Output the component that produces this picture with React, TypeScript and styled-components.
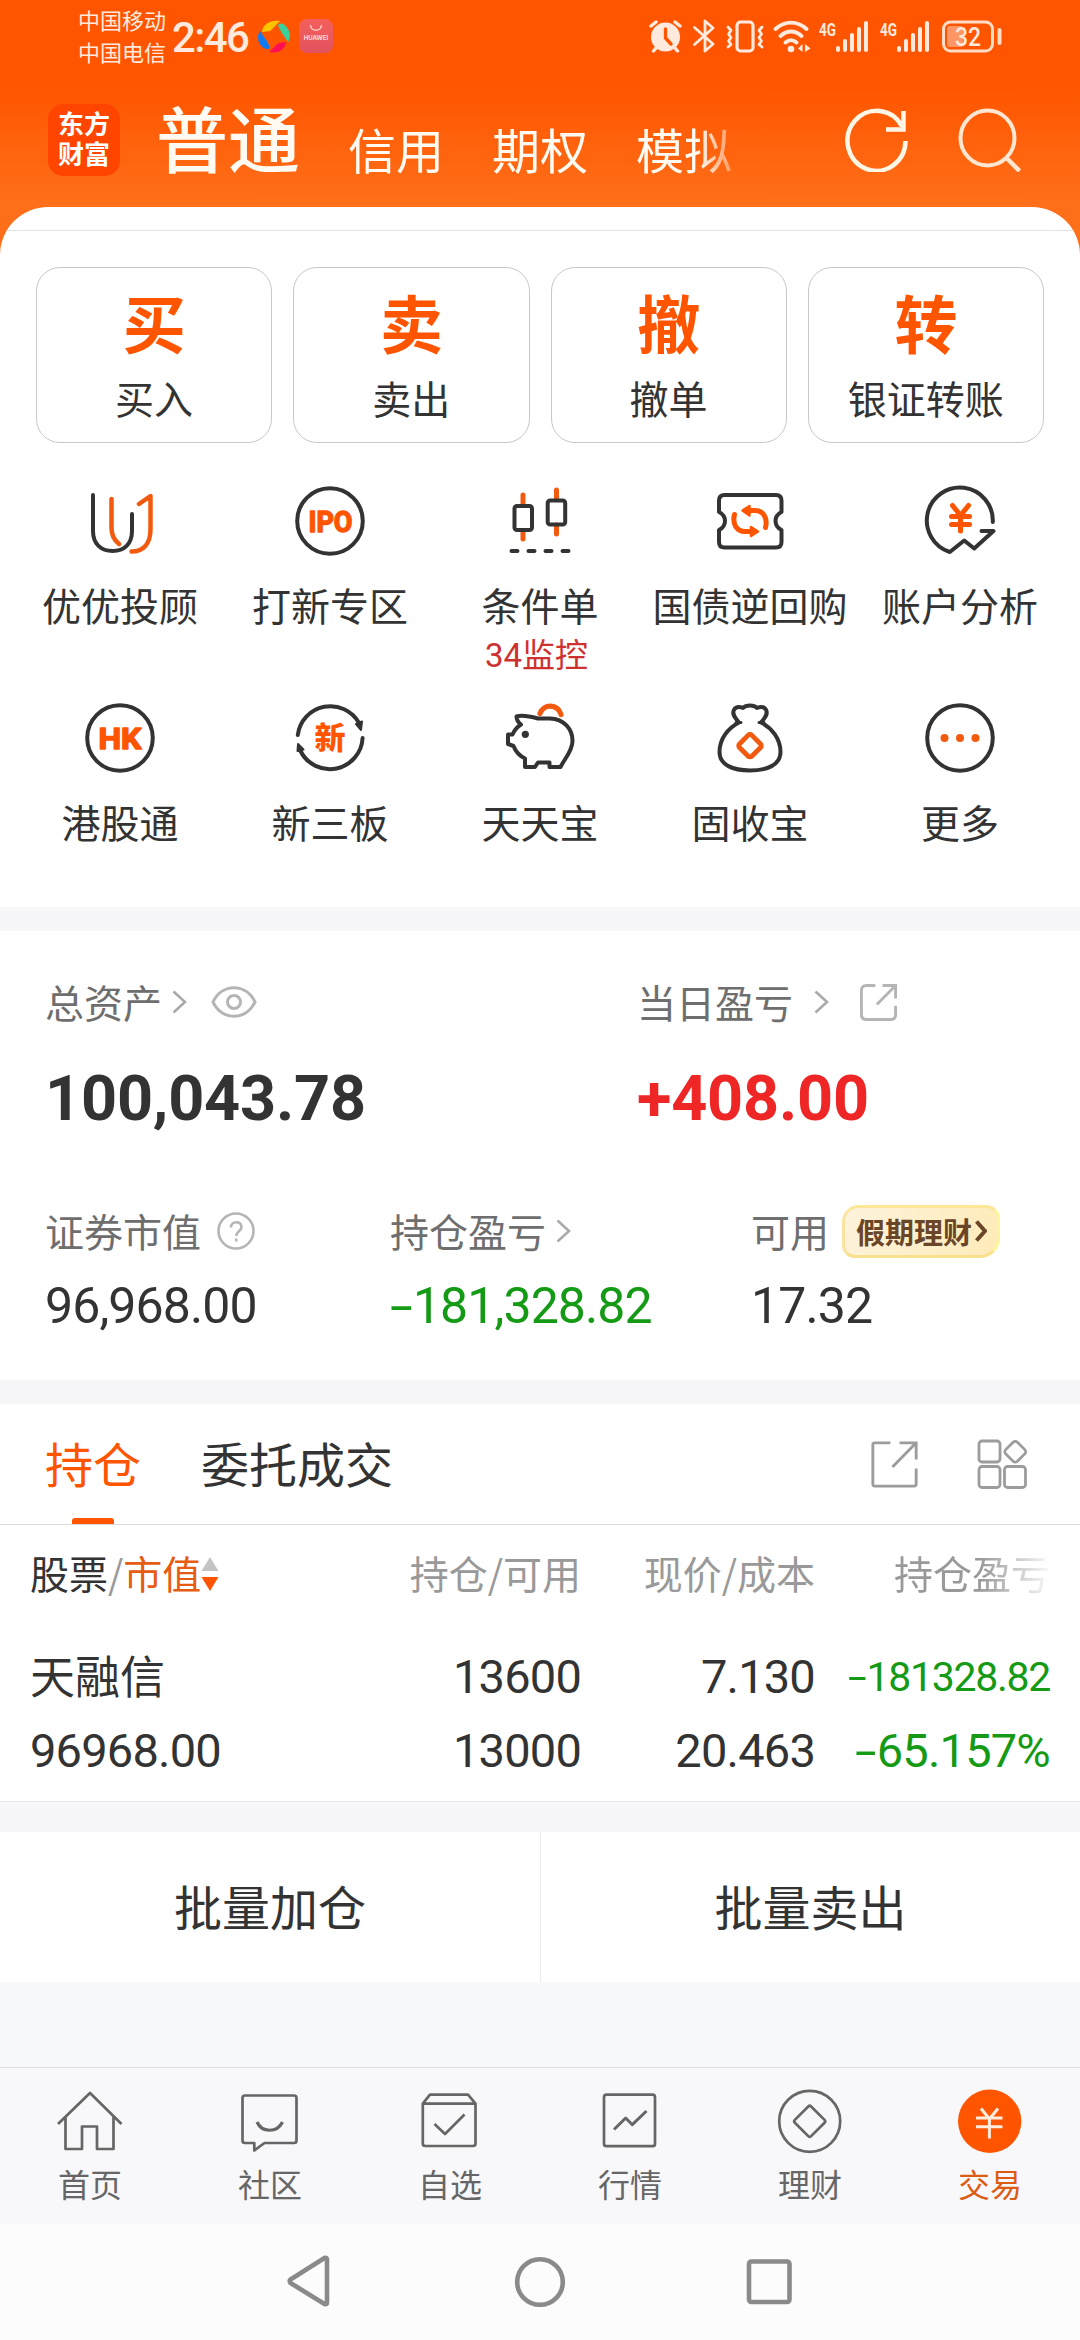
import React from 'react';
import styled, { createGlobalStyle } from 'styled-components';

const INK = '#333333';
const ORANGE = '#ff5500';
const ACCENT = '#f25a10';
const GREEN = '#159a15';
const CJK = '"Noto Sans CJK SC", "Noto Sans", sans-serif';
const NUM = 'Roboto, "Noto Sans CJK SC", sans-serif';

const GlobalStyle = createGlobalStyle`
  * { box-sizing: border-box; }
  body { margin: 0; background: #f7f8fa; font-family: ${CJK}; color: ${INK}; }
  svg { display: block; flex: none; }
`;

const Screen = styled.div`
  width: 1080px;
  height: 2340px;
  display: flex;
  flex-direction: column;
  overflow: hidden;
  background: #f7f8fa;
`;

/* ---------- header ---------- */
const Hero = styled.header`
  height: 267px;
  flex: none;
  display: flex;
  flex-direction: column;
  background: linear-gradient(#ff5500 0, #ff5500 85px, #ff6e18 200px, #ff701a 267px);
`;
const StatusBar = styled.div`
  height: 72px;
  display: flex;
  align-items: center;
  padding: 0 78px 0 78px;
  color: #ffeadd;
`;
const Carriers = styled.div`
  display: flex;
  flex-direction: column;
  width: 94px;
  font-size: 22px;
  line-height: 32px;
  padding-bottom: 2px;
`;
const Clock = styled.div`
  width: 86px;
  font: 500 42px/60px ${NUM};
  letter-spacing: -1.6px;
  padding-top: 4px;
  white-space: nowrap;
`;
const AppMarks = styled.div`
  display: flex;
  gap: 9px;
  align-items: center;
`;
const HuaweiTile = styled.div`
  width: 34px;
  height: 34px;
  border-radius: 8px;
  background: linear-gradient(#f5605c, #e2525f);
  display: flex;
  flex-direction: column;
  align-items: center;
  padding-top: 5px;
  color: #ffdcd8;
  font: 700 6px/8px Inter, sans-serif;
`;
const StatusRight = styled.div`
  margin-left: auto;
  display: flex;
  align-items: center;
`;
const TitleBar = styled.div`
  height: 135px;
  display: flex;
  align-items: center;
  padding: 0 59px 0 48px;
`;
const Logo = styled.div`
  width: 72px;
  height: 72px;
  border-radius: 15px;
  background: #ff4500;
  color: #fff;
  padding: 4px 10px 0;
  font-weight: 700;
  font-size: 26px;
  line-height: 30px;
  word-break: break-all;
`;
const Accounts = styled.nav`
  display: flex;
  align-items: flex-end;
  gap: 48px;
  width: 602px;
  margin-left: 36px;
  padding-bottom: 7px;
  color: #fffaf2;
  white-space: nowrap;
  mask-image: linear-gradient(90deg, #000 542px, transparent 594px);
`;
const Account = styled.span<{ $active?: boolean }>`
  font-size: ${(p) => (p.$active ? 72 : 48)}px;
  line-height: ${(p) => (p.$active ? 80 : 56)}px;
  font-weight: ${(p) => (p.$active ? 500 : 400)};
`;
const TitleActions = styled.div`
  margin-left: auto;
  display: flex;
  gap: 48px;
`;

/* ---------- shortcuts ---------- */
const Sheet = styled.section`
  height: 700px;
  margin-top: -60px;
  flex: none;
  border-radius: 48px 48px 0 0;
  background: #fff;
  overflow: hidden;
  padding-top: 23px;
`;
const Hairline = styled.div`
  height: 1px;
  background: #e2e2e2;
`;
const Cards = styled.div`
  display: grid;
  grid-template-columns: repeat(4, 1fr);
  gap: 21px;
  padding: 36px 36px 0;
`;
const Card = styled.button`
  height: 176px;
  padding: 21px 0 0;
  border: 1px solid #c8c8c8;
  border-radius: 24px;
  background: #fff;
  display: flex;
  flex-direction: column;
  align-items: center;
  font-family: ${CJK};
  color: ${INK};
`;
const CardGlyph = styled.span`
  font-size: 63px;
  line-height: 64px;
  font-weight: 700;
  color: ${ORANGE};
`;
const CardLabel = styled.span`
  font-size: 39px;
  line-height: 48px;
  margin-top: 20px;
`;
const Shortcuts = styled.div`
  display: grid;
  grid-template-columns: repeat(5, 210px);
  grid-auto-rows: 217px;
  padding: 42px 15px 0;
`;
const Shortcut = styled.div`
  display: flex;
  flex-direction: column;
  align-items: center;
  white-space: nowrap;
`;
const ShortcutLabel = styled.span`
  font-size: 39px;
  line-height: 48px;
  margin-top: 23px;
`;
const ShortcutNote = styled.span`
  font: 400 33px/42px ${NUM};
  color: #cf3030;
  margin: 7px 7px 0 0;
`;
const Band = styled.div<{ $h: number }>`
  height: ${(p) => p.$h}px;
  flex: none;
  background: #f7f7fa;
`;

/* ---------- assets ---------- */
const Assets = styled.section`
  height: 449px;
  flex: none;
  background: #fff;
  padding: 43px 0 0 45px;
`;
const Totals = styled.div`
  display: grid;
  grid-template-columns: 592px 1fr;
`;
const Details = styled.div`
  display: grid;
  grid-template-columns: 345px 361px 1fr;
  margin-top: 66px;
`;
const Metric = styled.div`
  display: flex;
  flex-direction: column;
`;
const MetricHead = styled.div`
  display: flex;
  align-items: center;
  height: 56px;
  font-size: 39px;
  color: #6e6e6e;
  white-space: nowrap;
`;
const HeadText = styled.span`
  line-height: 56px;
  padding-bottom: 3px;
`;
const HeadIcon = styled.span<{ $gap: number }>`
  margin-left: ${(p) => p.$gap}px;
`;
const Total = styled.div<{ $color?: string }>`
  font: 700 63px/76px ${NUM};
  letter-spacing: -0.2px;
  margin-top: 31px;
  color: ${(p) => p.$color ?? INK};
`;
const Value = styled.div<{ $color?: string }>`
  font: 400 50px/60px ${NUM};
  letter-spacing: -0.9px;
  margin-top: 17px;
  color: ${(p) => p.$color ?? INK};
`;
const Minus = styled.span`
  display: inline-block;
  transform: scaleX(1.65);
  transform-origin: left center;
  margin-right: 0.2em;
`;
const Promo = styled.span`
  display: flex;
  align-items: center;
  gap: 3px;
  width: 158px;
  height: 53px;
  margin: 1px 0 0 13px;
  padding: 0 0 2px 11px;
  border-radius: 17px 14px 20px 13px;
  border: 3px solid #fbe795;
  border-color: #fbe795 #fdf59c #f9e08c #f9e3a0;
  background: linear-gradient(110deg, #fdf3dc, #feebb8);
  font-size: 29px;
  line-height: 44px;
  font-weight: 700;
  color: #6b4528;
`;

/* ---------- positions ---------- */
const Positions = styled.section`
  height: 398px;
  flex: none;
  background: #fff;
  border-bottom: 1px solid #e6e6ea;
`;
const Tabs = styled.div`
  height: 121px;
  display: flex;
  align-items: stretch;
  gap: 60px;
  padding: 0 52px 0 45px;
  border-bottom: 1px solid #dcdcdc;
`;
const Tab = styled.div<{ $active?: boolean }>`
  display: flex;
  flex-direction: column;
  align-items: center;
  justify-content: space-between;
  padding-top: 23px;
  font-size: 48px;
  line-height: 70px;
  color: ${(p) => (p.$active ? ORANGE : INK)};
`;
const TabMark = styled.div`
  width: 42px;
  height: 6px;
  border-radius: 3px 3px 0 0;
  background: ${ORANGE};
`;
const TabTools = styled.div`
  display: flex;
  align-items: center;
  gap: 59px;
  margin-left: auto;
`;
const GridRow = styled.div<{ $h: number; $top?: number }>`
  display: grid;
  grid-template-columns: 317px 234px 234px 235px;
  padding-left: 30px;
  margin-top: ${(p) => p.$top ?? 0}px;
  height: ${(p) => p.$h}px;
  align-items: center;
  white-space: nowrap;
`;
const HeadCell = styled.div<{ $fade?: boolean }>`
  font-size: 39px;
  line-height: 60px;
  padding-bottom: 3px;
  text-align: right;
  color: #999;
  ${(p) => (p.$fade ? 'mask-image: linear-gradient(90deg, #000 165px, transparent 240px);' : '')}
`;
const SortCell = styled.div`
  display: flex;
  align-items: center;
  font-size: 39px;
  line-height: 60px;
  color: #999;
`;
const SortText = styled.span<{ $color?: string }>`
  padding-bottom: 3px;
  color: ${(p) => p.$color ?? 'inherit'};
`;
const StockName = styled.div`
  font-size: 45px;
  line-height: 60px;
  padding-bottom: 4px;
`;
const NumCell = styled.div<{ $color?: string; $size?: number; $left?: boolean; $track?: number }>`
  font: 400 ${(p) => p.$size ?? 47}px/60px ${NUM};
  letter-spacing: ${(p) => p.$track ?? -0.8}px;
  text-align: ${(p) => (p.$left ? 'left' : 'right')};
  color: ${(p) => p.$color ?? INK};
`;
const Batch = styled.div`
  height: 150px;
  flex: none;
  display: grid;
  grid-template-columns: 540px 540px;
  background: #fff;
`;
const BatchButton = styled.button`
  border: 0;
  background: none;
  padding: 0 0 4px;
  font-family: ${CJK};
  font-size: 48px;
  color: ${INK};
  & + & {
    border-left: 1px solid #ececef;
  }
`;

/* ---------- bottom ---------- */
const TabBar = styled.nav`
  height: 157px;
  flex: none;
  margin-top: auto;
  display: grid;
  grid-template-columns: repeat(6, 1fr);
  border-top: 1px solid #dedede;
  background: #f8f8fa;
`;
const TabItem = styled.div<{ $active?: boolean }>`
  display: flex;
  flex-direction: column;
  align-items: center;
  padding-top: 17px;
  font-size: 32px;
  line-height: 44px;
  gap: 4px;
  color: ${(p) => (p.$active ? '#dd5c14' : '#666')};
`;
const SystemNav = styled.div`
  height: 116px;
  flex: none;
  display: flex;
  align-items: center;
  justify-content: center;
  gap: 178px;
  background: #fcfcfc;
`;

/* ---------- icons ---------- */
const Glyph = ({ children }: { children: React.ReactNode }) => (
  <svg width="72" height="72" viewBox="0 0 72 72" fill="none" stroke={INK} strokeWidth="4" strokeLinecap="round" strokeLinejoin="round">
    {children}
  </svg>
);
const BarGlyph = ({ children }: { children: React.ReactNode }) => (
  <svg width="72" height="72" viewBox="0 0 72 72" fill="none" stroke="#666" strokeWidth="2.7" strokeLinejoin="round">
    {children}
  </svg>
);
const Chevron = ({ color = '#aaa', w = 15, h = 24, s = 2.6 }: { color?: string; w?: number; h?: number; s?: number }) => (
  <svg width={w} height={h} viewBox={`0 0 ${w} ${h}`} fill="none" stroke={color} strokeWidth={s}>
    <path d={`M1.5 1.5L${w - 2} ${h / 2}L1.5 ${h - 1.5}`} />
  </svg>
);
const Signal = () => (
  <svg width="51" height="34" viewBox="0 0 51 34" fill="#ffeadd">
    <text x="1" y="17" fontFamily="Roboto" fontWeight="700" fontSize="18" textLength="17" lengthAdjust="spacingAndGlyphs">4G</text>
    <rect x="18" y="27" width="4" height="6" rx="2" />
    <rect x="25" y="20" width="4" height="13" rx="2" />
    <rect x="32" y="14" width="4" height="19" rx="2" />
    <rect x="39" y="8" width="4" height="25" rx="2" />
    <rect x="46" y="2" width="4" height="31" rx="2" />
  </svg>
);
const StatusIcons = () => (
  <StatusRight>
    <svg width="44" height="34" viewBox="0 0 44 34" fill="none" stroke="#ffeadd" strokeWidth="3.4" strokeLinecap="round">
      <circle cx="16.5" cy="18" r="14.5" fill="#ffeadd" stroke="none" />
      <path d="M2 7L7 3M31 7L26 3M4.500 32L7 29M28.500 32L26 29" />
      <path d="M16.500 10V19L22 25" stroke="#ff5500" />
    </svg>
    <svg width="33" height="34" viewBox="0 0 33 34" fill="none" stroke="#ffeadd" strokeWidth="2.800" strokeLinejoin="round" strokeLinecap="round">
      <path d="M1.500 8.500L20 25L12 32V2L20 9L1.500 25.500" />
    </svg>
    <svg width="47" height="34" viewBox="0 0 47 34" fill="none" stroke="#ffeadd" strokeWidth="3.200" strokeLinejoin="round" strokeLinecap="round">
      <rect x="11" y="3" width="16" height="29" rx="3.500" />
      <path d="M2 8L5 11.500L2.500 15L5 18.500L2.500 22L5 25.500L2 28M36 8L33 11.500L35.500 15L33 18.500L35.500 22L33 25.500L36 28" strokeWidth="2.800" />
    </svg>
    <svg width="45" height="34" viewBox="0 0 45 34" fill="none" stroke="#ffeadd" strokeWidth="3.800" strokeLinecap="round">
      <path d="M2.500 10C12 1.500 24 1.500 33.500 10M7.500 17C14 11 22 11 28.500 17M12.500 23.500C16 20.500 20 20.500 23.500 23.500" />
      <circle cx="18" cy="30" r="3.300" fill="#ffeadd" stroke="none" />
      <path d="M29.500 25V33L25 29.500ZM32 25V33L37.500 29.500Z" fill="#ffeadd" stroke="none" />
    </svg>
    <Signal />
    <svg width="10" height="34" />
    <Signal />
    <svg width="72" height="34" viewBox="0 0 72 34" fill="none">
      <rect x="13.500" y="3" width="49" height="29" rx="7" stroke="#ffdcc6" strokeWidth="3" />
      <rect x="17" y="7" width="16" height="21" rx="3" fill="#ff9666" />
      <rect x="67.500" y="9" width="4" height="17" rx="2" fill="#ffdcc6" />
      <text x="25" y="26.500" fill="#ffeadd" fontFamily="Roboto" fontWeight="500" fontSize="25" textLength="26" lengthAdjust="spacingAndGlyphs">32</text>
    </svg>
  </StatusRight>
);
const Pinwheel = () => (
  <svg width="32" height="33" viewBox="0 0 32 33">
    <path d="M4 12C5 4 12 0 22 1C18 4 16 8 12 11Z" fill="#ffc400" />
    <path d="M20 5C23 2 27 4 30 9C33 14 32 19 30 22C28 18 22 12 20 5Z" fill="#3bcf9c" />
    <path d="M28 22C27 29 21 34 11 32C15 29 17 25 21 23Z" fill="#ff0d55" />
    <path d="M12 28C9 30 5 29 2 24C-1 19 0 14 2 11C4 15 10 21 12 28Z" fill="#0f7bf5" />
  </svg>
);
const External = ({ size, color, r, s }: { size: number; color: string; r: number; s: number }) => (
  <svg width={size} height={size} viewBox="0 0 46 46" fill="none" stroke={color} strokeWidth={s}>
    <path d={`M19 1.800H${1.8 + r}Q1.800 1.800 1.800 ${1.8 + r}V${44.2 - r}Q1.800 44.200 ${1.8 + r} 44.200H${44.2 - r}Q44.200 44.200 44.200 ${44.2 - r}V27M28 1.800H44.200V18M44.200 1.800L21 25.500`} />
  </svg>
);

const shortcuts: { label: string; note?: string; icon: React.ReactNode }[] = [
  {
    label: '优优投顾',
    icon: (
      <Glyph>
        <path d="M27.500 14V43C27.500 50 30 55 35 59M55 19L66.500 11V44C66.500 58 60 66.500 47.500 66.500" stroke={ACCENT} strokeWidth="4.500" />
        <path d="M9 10V46C9 59 17 66 28.600 66S48 59 48 46V29" />
      </Glyph>
    ),
  },
  {
    label: '打新专区',
    icon: (
      <Glyph>
        <circle cx="36" cy="36" r="32.800" />
        <text x="14.500" y="46.500" fontFamily="Roboto" fontWeight="700" fontSize="30" fill={ORANGE} stroke={ORANGE} strokeWidth="1.500" textLength="44" lengthAdjust="spacingAndGlyphs">IPO</text>
      </Glyph>
    ),
  },
  {
    label: '条件单',
    note: '34监控',
    icon: (
      <Glyph>
        <path d="M19 10V20M19 46V54M52.500 5V14M52.500 40V49" stroke={ACCENT} strokeWidth="5" />
        <rect x="10.500" y="21" width="17.500" height="24" rx="2.500" />
        <rect x="43.700" y="15.500" width="17.500" height="24" rx="2.500" />
        <path d="M7.500 66H13.500M24.500 66H30.500M41.500 66H47.500M58.500 66H64.500" />
      </Glyph>
    ),
  },
  {
    label: '国债逆回购',
    icon: (
      <Glyph>
        <path d="M10.500 10H62Q67.500 10 67.500 15.500V27C59.500 31 59.500 41 67.500 45V57Q67.500 62.500 62 62.500H10.500Q5 62.500 5 57V45C13 41 13 31 5 27V15.500Q5 10 10.500 10Z" />
        <g stroke={ORANGE} strokeWidth="5">
          <path d="M51.500 42.500C54 33 49 25.500 41 25.500H36M20.500 29.500C18 39 23 46.500 31 46.500H37" />
          <path d="M28.500 25.500L35.500 21V30.500ZM44 46.500L37 42V51Z" fill={ORANGE} strokeWidth="2.500" />
        </g>
      </Glyph>
    ),
  },
  {
    label: '账户分析',
    icon: (
      <Glyph>
        <path d="M68.800 37A33 33 0 1 0 25.800 67L40.200 55.500L50.200 63.500L69.500 46H57.500" />
        <path d="M28.500 20.500L36.500 30.500L44.500 20.500M36.500 31V46M27.500 31.500H45.500M27.500 39.500H45.500" stroke={ORANGE} strokeWidth="5" />
      </Glyph>
    ),
  },
  {
    label: '港股通',
    icon: (
      <Glyph>
        <circle cx="36" cy="36" r="32.800" />
        <text x="14.500" y="46.500" fontFamily="Roboto" fontWeight="700" fontSize="30" fill={ORANGE} stroke={ORANGE} strokeWidth="1.500" textLength="43" lengthAdjust="spacingAndGlyphs">HK</text>
      </Glyph>
    ),
  },
  {
    label: '新三板',
    icon: (
      <Glyph>
        <path d="M3.800 33A32.800 32.800 0 0 1 65 21M68.600 36A32.800 32.800 0 0 1 6.500 49" />
        <path d="M68 19.500L62 22L67 28ZM4 42L9.500 47.500L3.500 49Z" fill={INK} strokeWidth="2" />
        <text x="20.500" y="47" fontFamily="Noto Sans CJK SC" fontWeight="900" fontSize="31" fill={ORANGE} stroke="none">新</text>
      </Glyph>
    ),
  },
  {
    label: '天天宝',
    icon: (
      <Glyph>
        <path d="M36 11.500C39.500 1.500 53.500 1.500 57 12.500" stroke={ACCENT} strokeWidth="5.200" />
        <path d="M12.500 14.500C18 12.500 25 14 34 16.500H46C60 17 68.500 27 68.500 39C68.500 49 61 56 56.500 65H45.500V60.500H34L31 65H21V56.500C14 53 11 48 9.500 44L4 42V32.500H8.500C10.500 28 13 25 17 22.500Q12.500 19 12.500 14.500Z" />
        <circle cx="21.300" cy="32.300" r="3.600" fill={INK} stroke="none" />
      </Glyph>
    ),
  },
  {
    label: '固收宝',
    icon: (
      <Glyph>
        <path d="M25 20.500C20 15 18 11.500 20 7.800C22 4.500 26 4.800 29 6C32 2.500 40 2.500 43 6C46 4.800 50 4.500 52 7.800C54 11.500 52 15 47 20.500C58 26 66.500 37 66.500 50C66.500 63 53 68.500 36 68.500S5.500 63 5.500 50C5.500 37 14 26 25 20.500Z" />
        <path d="M22 20.500H27M45 20.500H50" strokeWidth="3" />
        <rect x="27.300" y="35" width="17.400" height="17.400" rx="2.500" transform="rotate(45 36 43.700)" stroke={ACCENT} strokeWidth="4.800" />
      </Glyph>
    ),
  },
  {
    label: '更多',
    icon: (
      <Glyph>
        <circle cx="36" cy="36" r="32.800" />
        <g fill={ACCENT} stroke="none">
          <circle cx="20.500" cy="36" r="4" />
          <circle cx="36" cy="36" r="4" />
          <circle cx="51.500" cy="36" r="4" />
        </g>
      </Glyph>
    ),
  },
];

const cards = [
  ['买', '买入'],
  ['卖', '卖出'],
  ['撤', '撤单'],
  ['转', '银证转账'],
];

const bar: { label: string; active?: boolean; icon: React.ReactNode }[] = [
  { label: '首页', icon: <path d="M4 39L36 8L67.500 39M11.500 32V64H28V41.500H43V64H59.500V32" /> },
  {
    label: '社区',
    icon: (
      <>
        <path d="M11 10.500H60Q62.500 10.500 62.500 13V55.500Q62.500 58 60 58H30.500L20.300 65.500V58H11Q8.500 58 8.500 55.500V13Q8.500 10.500 11 10.500Z" />
        <path d="M23 37C28 48 43 48 48.500 37" strokeWidth="3.200" />
      </>
    ),
  },
  {
    label: '自选',
    icon: (
      <>
        <path d="M8.800 18.700L16 9.700H54L61.500 18.700V58.500Q61.500 61 59 61H11.300Q8.800 61 8.800 58.500ZM8.800 18.700H61.500" />
        <path d="M20.500 39L31 49L50.500 29.500" />
      </>
    ),
  },
  {
    label: '行情',
    icon: (
      <>
        <rect x="10" y="9.700" width="51" height="51.500" rx="2.500" />
        <path d="M20 44.500L31.700 33L38.300 39.700L52.500 26" strokeWidth="3" />
      </>
    ),
  },
  {
    label: '理财',
    icon: (
      <>
        <circle cx="35.700" cy="36.300" r="30.500" />
        <rect x="24.200" y="24.800" width="23" height="23" rx="2" transform="rotate(45 35.700 36.300)" />
      </>
    ),
  },
  {
    label: '交易',
    active: true,
    icon: (
      <>
        <circle cx="35.700" cy="36.300" r="31.700" fill={ORANGE} stroke="none" />
        <path d="M27 23.500L35.400 34L44 23.500M35.400 33V53.500M22 33H48.500M22 41.700H48.500" stroke="#ffecdc" strokeWidth="3" />
      </>
    ),
  },
];

export default function App() {
  return (
    <Screen>
      <GlobalStyle />
      <Hero>
        <StatusBar>
          <Carriers>
            <span>中国移动</span>
            <span>中国电信</span>
          </Carriers>
          <Clock>2:46</Clock>
          <AppMarks>
            <Pinwheel />
            <HuaweiTile>
              <svg width="14" height="10" viewBox="0 0 14 10" fill="none" stroke="#ffc9bf" strokeWidth="1.500">
                <path d="M1.500 1C2 8 12 8 12.500 1" />
              </svg>
              HUAWEI
            </HuaweiTile>
          </AppMarks>
          <StatusIcons />
        </StatusBar>
        <TitleBar>
          <Logo>东方财富</Logo>
          <Accounts>
            <Account $active>普通</Account>
            <Account>信用</Account>
            <Account>期权</Account>
            <Account>模拟</Account>
          </Accounts>
          <TitleActions>
            <svg width="64" height="64" viewBox="0 0 64 64" fill="none" stroke="#fff6e6" strokeWidth="4.500">
              <path d="M60.500 33A29 30 0 1 1 57 18.500" />
              <path d="M58.500 3V21.500H41" />
            </svg>
            <svg width="64" height="64" viewBox="0 0 64 64" fill="none" stroke="#ffe6d0" strokeWidth="4">
              <ellipse cx="30.500" cy="30" rx="27" ry="27.500" />
              <path d="M49 49.500L62.500 63" strokeWidth="4.500" />
            </svg>
          </TitleActions>
        </TitleBar>
      </Hero>

      <Sheet>
        <Hairline />
        <Cards>
          {cards.map(([glyph, label]) => (
            <Card key={label}>
              <CardGlyph>{glyph}</CardGlyph>
              <CardLabel>{label}</CardLabel>
            </Card>
          ))}
        </Cards>
        <Shortcuts>
          {shortcuts.map((s) => (
            <Shortcut key={s.label}>
              {s.icon}
              <ShortcutLabel>{s.label}</ShortcutLabel>
              {s.note && <ShortcutNote>{s.note}</ShortcutNote>}
            </Shortcut>
          ))}
        </Shortcuts>
      </Sheet>
      <Band $h={24} />

      <Assets>
        <Totals>
          <Metric>
            <MetricHead>
              <HeadText>总资产</HeadText>
              <HeadIcon $gap={10}><Chevron /></HeadIcon>
              <HeadIcon $gap={24}>
                <svg width="46" height="32" viewBox="0 0 46 32" fill="none" stroke="#b5b5b5" strokeWidth="3">
                  <path d="M2 16C11 -3 35 -3 44 16C35 35 11 35 2 16Z" />
                  <circle cx="23" cy="16" r="6.500" />
                </svg>
              </HeadIcon>
            </MetricHead>
            <Total>100,043.78</Total>
          </Metric>
          <Metric>
            <MetricHead>
              <HeadText>当日盈亏</HeadText>
              <HeadIcon $gap={21}><Chevron /></HeadIcon>
              <HeadIcon $gap={31}><External size={37} color="#b5b5b5" r={6} s={3.6} /></HeadIcon>
            </MetricHead>
            <Total $color="#ee2626">+408.00</Total>
          </Metric>
        </Totals>
        <Details>
          <Metric>
            <MetricHead>
              <HeadText>证券市值</HeadText>
              <HeadIcon $gap={16}>
                <svg width="38" height="38" viewBox="0 0 38 38" fill="none" stroke="#b5b5b5" strokeWidth="2.600">
                  <circle cx="19" cy="19" r="17.500" />
                  <path d="M14 15.500C14 8.500 24.500 8.500 24.500 15C24.500 19.500 19.200 19 19.200 24" />
                  <path d="M19.200 26.500V29.500" />
                </svg>
              </HeadIcon>
            </MetricHead>
            <Value>96,968.00</Value>
          </Metric>
          <Metric>
            <MetricHead>
              <HeadText>持仓盈亏</HeadText>
              <HeadIcon $gap={10}><Chevron /></HeadIcon>
            </MetricHead>
            <Value $color={GREEN}><Minus>-</Minus>181,328.82</Value>
          </Metric>
          <Metric>
            <MetricHead>
              <HeadText>可用</HeadText>
              <Promo>
                假期理财
                <Chevron color="#6b4528" w={12} h={22} s={4} />
              </Promo>
            </MetricHead>
            <Value>17.32</Value>
          </Metric>
        </Details>
      </Assets>
      <Band $h={24} />

      <Positions>
        <Tabs>
          <Tab $active>
            持仓
            <TabMark />
          </Tab>
          <Tab>委托成交</Tab>
          <TabTools>
            <External size={47} color="#9c9c9c" r={2} s={2.8} />
            <svg width="51" height="50" viewBox="0 0 51 50" fill="none" stroke="#9c9c9c" strokeWidth="2.800">
              <rect x="2" y="2" width="21" height="21" rx="3" />
              <rect x="2" y="27.500" width="21" height="21" rx="3" />
              <rect x="27.500" y="27.500" width="21" height="21" rx="3" />
              <rect x="30" y="4.500" width="16.500" height="16.500" rx="3" transform="rotate(45 38.250 12.750)" />
            </svg>
          </TabTools>
        </Tabs>
        <GridRow $h={97}>
          <SortCell>
            <SortText $color={INK}>股票</SortText>
            <SortText>/</SortText>
            <SortText $color="#e55c12">市值</SortText>
            <svg width="18" height="36" viewBox="0 0 18 36">
              <path d="M9 1L17.500 15H0.500Z" fill="#c4c4c4" />
              <path d="M9 35L17.500 21H0.500Z" fill={ORANGE} />
            </svg>
          </SortCell>
          <HeadCell>持仓/可用</HeadCell>
          <HeadCell>现价/成本</HeadCell>
          <HeadCell $fade>持仓盈亏</HeadCell>
        </GridRow>
        <GridRow $h={74} $top={18}>
          <StockName>天融信</StockName>
          <NumCell>13600</NumCell>
          <NumCell>7.130</NumCell>
          <NumCell $color={GREEN} $size={41} $track={-1.3}><Minus>-</Minus>181328.82</NumCell>
        </GridRow>
        <GridRow $h={74}>
          <NumCell $left>96968.00</NumCell>
          <NumCell>13000</NumCell>
          <NumCell>20.463</NumCell>
          <NumCell $color={GREEN}><Minus>-</Minus>65.157%</NumCell>
        </GridRow>
      </Positions>
      <Band $h={30} />
      <Batch>
        <BatchButton>批量加仓</BatchButton>
        <BatchButton>批量卖出</BatchButton>
      </Batch>

      <TabBar>
        {bar.map((b) => (
          <TabItem key={b.label} $active={b.active}>
            <BarGlyph>{b.icon}</BarGlyph>
            {b.label}
          </TabItem>
        ))}
      </TabBar>
      <SystemNav>
        <svg width="50" height="54" viewBox="0 0 50 54" fill="none" stroke="#8a8a8a" strokeWidth="4.600" strokeLinejoin="round">
          <path d="M42 4.500V47.500Q42 50 39.500 49L5.500 28Q4 26 5.500 24.500L39.500 3Q42 2 42 4.500Z" />
        </svg>
        <svg width="54" height="54" viewBox="0 0 54 54" fill="none" stroke="#8a8a8a" strokeWidth="4.600">
          <circle cx="27" cy="27" r="22.800" />
        </svg>
        <svg width="50" height="54" viewBox="0 0 50 54" fill="none" stroke="#8a8a8a" strokeWidth="4.600">
          <rect x="4" y="6.500" width="40.500" height="40.500" rx="2.500" />
        </svg>
      </SystemNav>
    </Screen>
  );
}
